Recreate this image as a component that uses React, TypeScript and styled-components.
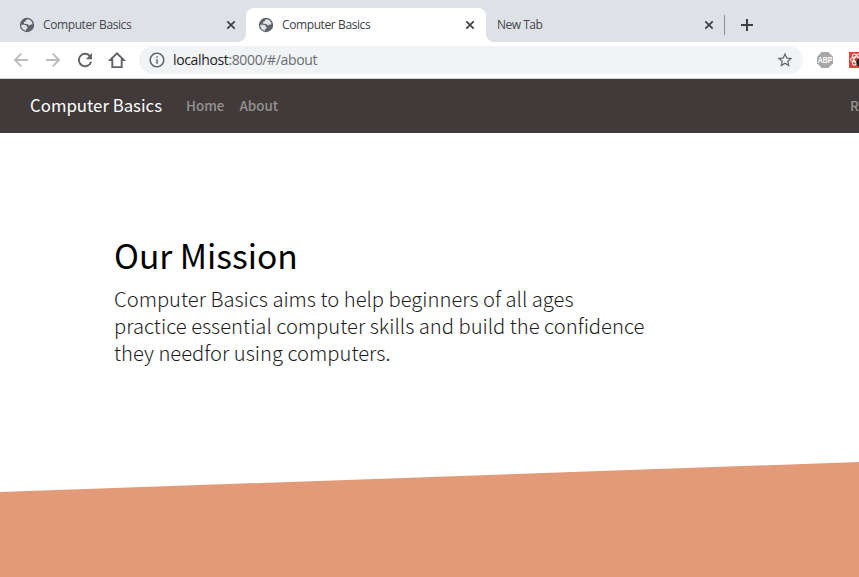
import React from "react";
import styled, { createGlobalStyle } from "styled-components";
import { MdInfoOutline, MdStarBorder } from "react-icons/md";

const GlobalStyle = createGlobalStyle`
  * { box-sizing: border-box; }
  body { margin: 0; background: #fff; overflow: hidden; }
`;

const uiFont = `"Open Sans", "Noto Sans", sans-serif`;
const pageFont = `"Source Sans Pro", "Noto Sans CJK SC", sans-serif`;

const Window = styled.div`
  width: 859px;
  height: 577px;
  display: flex;
  flex-direction: column;
  overflow: hidden;
`;

const TabStrip = styled.div`
  height: 42px;
  flex: none;
  display: flex;
  align-items: flex-end;
  padding-left: 7px;
  background: #dee1e6;
  font-family: ${uiFont};
`;

const Tab = styled.div<{ $active?: boolean; $width: number; $inset?: number }>`
  position: relative;
  width: ${(p) => p.$width}px;
  height: 34px;
  display: flex;
  align-items: center;
  padding: 0 ${(p) => (p.$active ? 10 : 9)}px 0 ${(p) => p.$inset ?? 12}px;
  border-radius: 8px 8px 0 0;
  background: ${(p) => (p.$active ? "#fff" : "transparent")};
  color: ${(p) => (p.$active ? "#3c4043" : "#45494e")};

  &::before,
  &::after {
    content: "";
    display: ${(p) => (p.$active ? "block" : "none")};
    position: absolute;
    bottom: 0;
    width: 8px;
    height: 8px;
  }
  &::before {
    left: -8px;
    background: radial-gradient(circle at 0 0, transparent 7.5px, #fff 8.2px);
  }
  &::after {
    right: -8px;
    background: radial-gradient(circle at 100% 0, transparent 7.5px, #fff 8.2px);
  }
`;

const TabTitle = styled.span<{ $spacing?: number }>`
  flex: 1;
  font-size: 12px;
  line-height: 16px;
  letter-spacing: ${(p) => p.$spacing ?? -0.4}px;
  white-space: nowrap;
`;

const Favicon = styled.svg`
  width: 16px;
  height: 16px;
  margin-right: 8px;
`;

const Cross = styled.svg`
  width: 12px;
  height: 12px;
`;

const TabDivider = styled.div`
  width: 1px;
  height: 20px;
  margin-bottom: 7px;
  background: #868a90;
`;

const NewTab = styled.svg`
  width: 14px;
  height: 14px;
  margin: 0 0 10px 15px;
`;

const Toolbar = styled.div`
  height: 37px;
  flex: none;
  display: flex;
  align-items: center;
  padding-left: 11px;
  background: #fff;
  border-bottom: 1px solid #d5d8dd;
  font-family: ${uiFont};
`;

const NavIcons = styled.div`
  display: flex;
  flex: none;
  gap: 12px;
  width: 128px;
`;

const NavIcon = styled.svg<{ $muted?: boolean }>`
  display: block;
  flex: none;
  width: 20px;
  height: 20px;
  fill: none;
  stroke: ${(p) => (p.$muted ? "#babcbe" : "#5f6368")};
  stroke-width: 1.9;
`;

const Omnibox = styled.div`
  width: 664px;
  height: 28px;
  flex: none;
  display: flex;
  align-items: center;
  padding: 0 9px;
  border-radius: 14px;
  background: #f1f3f4;
  color: #5f6368;
`;

const Url = styled.span`
  flex: 1;
  margin-left: 7px;
  font-size: 14px;
  line-height: 20px;
  letter-spacing: -0.36px;
  color: #696d72;
`;

const Host = styled.span`
  color: #202124;
`;

const Extensions = styled.div`
  display: flex;
  flex: none;
  gap: 16px;
  margin-left: 14px;
  svg { display: block; flex: none; }
`;

const SiteNav = styled.nav`
  height: 54px;
  flex: none;
  display: flex;
  align-items: center;
  padding: 0 0 2px 30px;
  background: #403a3a;
  font-family: ${pageFont};
  white-space: nowrap;
`;

const Brand = styled.span`
  width: 156px;
  flex: none;
  font-size: 16.8px;
  line-height: 26px;
  color: #fff;
`;

const NavLink = styled.span<{ $width: number }>`
  width: ${(p) => p.$width}px;
  flex: none;
  font-size: 13.4px;
  line-height: 22px;
  font-weight: 500;
  color: #969292;
`;

const Page = styled.main`
  flex: 1;
  display: flex;
  flex-direction: column;
  font-family: ${pageFont};
  color: #000;
`;

const Mission = styled.section`
  height: 329px;
  padding: 99px 0 0 114px;
`;

const Heading = styled.h1`
  margin: 0;
  font-size: 33.6px;
  line-height: 46px;
  font-weight: 400;
  white-space: nowrap;
`;

const Lead = styled.p`
  margin: 7px 0 0;
  font-size: 20.2px;
  line-height: 27px;
  font-weight: 300;
  color: #1c1c1c;
  white-space: nowrap;
`;

const Slope = styled.section`
  flex: 1;
  background: #e39a79;
  clip-path: polygon(0 30px, 100% 0, 100% 100%, 0 100%);
`;

const Globe = () => (
  <Favicon viewBox="0 0 16 16">
    <circle cx="8" cy="8" r="7.2" fill="#5f6368" />
    <path d="M8.600 2.300c-1.200.4-1.800 1-1.600 1.800-1 .3-2 .8-2 1.700 0 .9.800 1.100 1.700 1.100h1.500c1 0 .9 1.700 2 1.700.9 0 .8-1 1.500-1h1.700C13.500 4.800 11.500 2.400 8.600 2.300z" fill="#dee1e6" />
    <path d="M2.200 7.800h3c1.700 0 2.600.7 2.600 1.700 0 .7.900.5.900 1.300 0 1-1.700.9-1.700 1.900v1C4.200 13.300 2.100 10.800 2.200 7.800z" fill="#dee1e6" />
  </Favicon>
);

const Close = () => (
  <Cross viewBox="0 0 12 12">
    <path d="M2.300 2.300l7.400 7.400M9.700 2.300l-7.400 7.400" stroke="#3c4043" strokeWidth="1.7" />
  </Cross>
);

export default function App() {
  return (
    <>
      <GlobalStyle />
      <Window>
        <TabStrip>
          <Tab $width={239}>
            <Globe />
            <TabTitle>Computer Basics</TabTitle>
            <Close />
          </Tab>
          <Tab $width={240} $active>
            <Globe />
            <TabTitle>Computer Basics</TabTitle>
            <Close />
          </Tab>
          <Tab $width={238} $inset={11}>
            <TabTitle $spacing={-0.5}>New Tab</TabTitle>
            <Close />
          </Tab>
          <TabDivider />
          <NewTab viewBox="0 0 14 14">
            <path d="M7 1v12M1 7h12" stroke="#3c4043" strokeWidth="2" />
          </NewTab>
        </TabStrip>
        <Toolbar>
          <NavIcons>
            <NavIcon $muted viewBox="0 0 20 20">
              <path d="M17 10H4.500M10.300 3.700L4 10l6.300 6.300" />
            </NavIcon>
            <NavIcon $muted viewBox="0 0 20 20">
              <path d="M3 10h12.500M9.700 3.700L16 10l-6.300 6.300" />
            </NavIcon>
            <NavIcon viewBox="0 0 20 20">
              <path d="M14.700 5.800A6.200 6.200 0 1 0 16.100 11.700" />
              <path d="M17 3v6.200h-6.200z" fill="#5f6368" stroke="none" />
            </NavIcon>
            <NavIcon viewBox="0 0 20 20">
              <path d="M3.200 10L10 3.300l6.800 6.700h-2.100v7.100H5.300V10z" />
            </NavIcon>
          </NavIcons>
          <Omnibox>
            <MdInfoOutline size={18} />
            <Url>
              <Host>localhost</Host>:8000/#/about
            </Url>
            <MdStarBorder size={18} />
          </Omnibox>
          <Extensions>
            <svg width="16" height="16" viewBox="0 0 16 16">
              <path d="M4.700 0h6.600L16 4.700v6.600L11.300 16H4.700L0 11.300V4.700z" fill="#a6a6a6" />
              <text x="0.700" y="11" fontFamily="Liberation Sans, sans-serif" fontWeight="700" fontSize="8.200" textLength="14.600" lengthAdjust="spacingAndGlyphs" fill="#fff">ABP</text>
            </svg>
            <svg width="16" height="16" viewBox="0 0 16 16">
              <rect width="16" height="16" fill="#dc4436" />
              <g fill="none" stroke="#fff" strokeWidth="1">
                <ellipse cx="7.500" cy="7.500" rx="6.200" ry="2.500" />
                <ellipse cx="7.500" cy="7.500" rx="6.200" ry="2.500" transform="rotate(60 7.500 7.500)" />
                <ellipse cx="7.500" cy="7.500" rx="6.200" ry="2.500" transform="rotate(120 7.500 7.500)" />
              </g>
              <ellipse cx="10.500" cy="10.500" rx="3.200" ry="4" fill="#252020" />
            </svg>
          </Extensions>
        </Toolbar>
        <SiteNav>
          <Brand>Computer Basics</Brand>
          <NavLink $width={53.5}>Home</NavLink>
          <NavLink $width={610.5}>About</NavLink>
          <NavLink $width={60}>R</NavLink>
        </SiteNav>
        <Page>
          <Mission>
            <Heading>Our Mission</Heading>
            <Lead>
              Computer Basics aims to help beginners of all ages
              <br />
              practice essential computer skills and build the confidence
              <br />
              they needfor using computers.
            </Lead>
          </Mission>
          <Slope />
        </Page>
      </Window>
    </>
  );
}
